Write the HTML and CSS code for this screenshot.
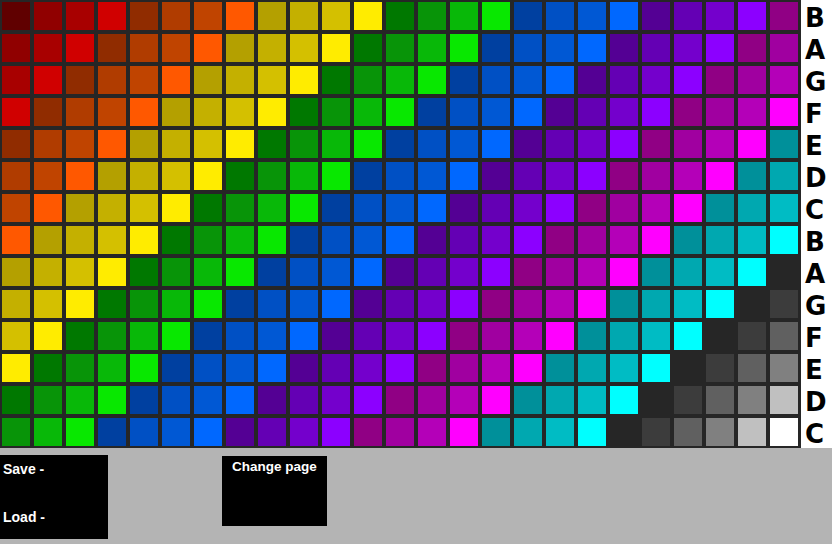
FILE: index.html
```html
<!DOCTYPE html>
<html lang="en">
<head>
    <title>Palette</title>
    <link rel="stylesheet" href="styles.css">
</head>
<body>

<div class="top">
    <div class="grid" id="grid">
        <!-- cells are inserted here -->
    </div>
    <div class="notes">
        <span>B</span><span>A</span><span>G</span><span>F</span><span>E</span><span>D</span><span>C</span>
        <span>B</span><span>A</span><span>G</span><span>F</span><span>E</span><span>D</span><span>C</span>
    </div>
</div>

<div class="bottom">
    <div class="box file-box">
        <div>Save -</div>
        <div>Load -</div>
    </div>
    <div class="box page-box">Change page</div>
</div>

<script>
    const palette = [
        "#600000", "#900000", "#a80000", "#d00000",
        "#902c00", "#b03c00", "#c04400", "#ff5800",
        "#b4a000", "#c4b000", "#d4c000", "#ffec00",
        "#007800", "#089408", "#08b808", "#08e800",
        "#0040a0", "#0050c4", "#0058d4", "#0068ff",
        "#540094", "#6400b4", "#7400cc", "#8c00ff",
        "#900084", "#a000a0", "#b400b8", "#ff00ff",
        "#00909a", "#00a8b0", "#00bcc4", "#00ffff",
        "#262626", "#3c3c3c", "#606060", "#808080", "#c0c0c0", "#ffffff"
    ];

    const grid = document.getElementById("grid");
    for (let row = 0; row < 14; row++) {
        for (let col = 0; col < 25; col++) {
            const cell = document.createElement("div");
            cell.className = "cell";
            cell.style.background = palette[row + col];
            grid.appendChild(cell);
        }
    }
</script>

</body>
</html>
```

FILE: styles.css
```css
body { margin: 0; background-color: #b4b4b4; font-family: "Liberation Sans", Arial, sans-serif; }
.top { display: flex; height: 448px; }
.grid { display: grid; grid-template-columns: repeat(25, 28px); grid-auto-rows: 28px; gap: 4px; padding: 2px 3px 2px 2px; background-color: #262626; }
.notes { flex: 1; display: flex; flex-direction: column; background: white; padding-left: 4px; }
.notes span { height: 32px; line-height: 37px; font-family: "DejaVu Sans", sans-serif; font-weight: bold; font-size: 26px; color: black; }
.bottom { display: flex; align-items: flex-start; height: 96px; padding-top: 7px; box-sizing: border-box; }
.box { background: black; color: white; font-weight: bold; font-size: 14px; line-height: 16px; }
.file-box { width: 108px; height: 84px; padding: 6px 0 0 3px; box-sizing: border-box; display: flex; flex-direction: column; gap: 32px; }
.page-box { width: 105px; height: 70px; margin: 1px 0 0 114px; padding-top: 3px; box-sizing: border-box; text-align: center; font-size: 13.5px; }
```
